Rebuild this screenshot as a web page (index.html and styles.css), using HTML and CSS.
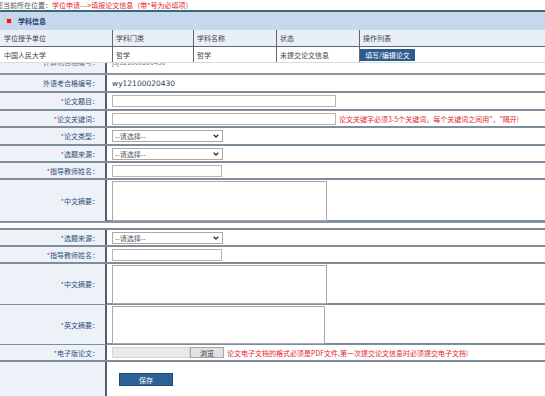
FILE: index.html
```html
<!DOCTYPE html>
<html lang="zh-CN">
<head>
  <meta charset="UTF-8">
  <title>填报论文信息</title>
  <link rel="stylesheet" href="styles.css">
</head>
<body>
  <div class="crumb">您当前所在位置：<span class="path">学位申请---&gt;填报论文信息（带*号为必填项）</span></div>

  <div class="bar"><span class="bar-icon"></span>学科信息</div>

  <div class="info-row info-head">
    <div class="cell">学位授予单位</div>
    <div class="cell">学科门类</div>
    <div class="cell">学科名称</div>
    <div class="cell">状态</div>
    <div class="cell">操作列表</div>
  </div>
  <div class="info-row info-data">
    <div class="cell">中国人民大学</div>
    <div class="cell">哲学</div>
    <div class="cell">哲学</div>
    <div class="cell">未提交论文信息</div>
    <div class="cell op"><a class="btn-edit" href="#">填写/编辑论文</a></div>
  </div>

  <form class="paper-form">
    <div class="row h12 clipped">
      <div class="label"><span>计算机合格编号：</span></div>
      <div class="value"><span>jsj121000200430</span></div>
    </div>
    <div class="row h18">
      <div class="label">外语考合格编号：</div>
      <div class="value code">wy12100020430</div>
    </div>
    <div class="row h18">
      <div class="label"><em>*</em>论文题目：</div>
      <div class="value"><input type="text" class="txt wide"></div>
    </div>
    <div class="row h17">
      <div class="label"><em>*</em>论文关键词：</div>
      <div class="value"><input type="text" class="txt wide"><span class="tip">论文关键字必须3-5个关键词，每个关键词之间用"，"隔开!</span></div>
    </div>
    <div class="row h18">
      <div class="label"><em>*</em>论文类型：</div>
      <div class="value">
        <span class="select"><select><option>--请选择--</option></select><svg width="6" height="4" viewBox="0 0 6 4"><path d="M0.7 0.7 L3 3 L5.3 0.7" fill="none" stroke="#333" stroke-width="1.3"/></svg></span>
      </div>
    </div>
    <div class="row h17">
      <div class="label"><em>*</em>选题来源：</div>
      <div class="value">
        <span class="select"><select><option>--请选择--</option></select><svg width="6" height="4" viewBox="0 0 6 4"><path d="M0.7 0.7 L3 3 L5.3 0.7" fill="none" stroke="#333" stroke-width="1.3"/></svg></span>
      </div>
    </div>
    <div class="row h17">
      <div class="label"><em>*</em>指导教师姓名：</div>
      <div class="value"><input type="text" class="txt short"></div>
    </div>
    <div class="row h42">
      <div class="label"><em>*</em>中文摘要：</div>
      <div class="value top"><textarea class="area a40"></textarea></div>
    </div>

    <div class="row sep"></div>

    <div class="row h17">
      <div class="label"><em>*</em>选题来源：</div>
      <div class="value">
        <span class="select"><select><option>--请选择--</option></select><svg width="6" height="4" viewBox="0 0 6 4"><path d="M0.7 0.7 L3 3 L5.3 0.7" fill="none" stroke="#333" stroke-width="1.3"/></svg></span>
      </div>
    </div>
    <div class="row h17">
      <div class="label"><em>*</em>指导教师姓名：</div>
      <div class="value"><input type="text" class="txt short"></div>
    </div>
    <div class="row h41">
      <div class="label"><em>*</em>中文摘要：</div>
      <div class="value top"><textarea class="area a39"></textarea></div>
    </div>
    <div class="row h40">
      <div class="label"><em>*</em>英文摘要：</div>
      <div class="value top"><textarea class="area a38"></textarea></div>
    </div>
    <div class="row h17">
      <div class="label"><em>*</em>电子版论文：</div>
      <div class="value">
        <span class="file"><span class="file-name"></span><span class="file-btn">浏览</span></span>
        <span class="tip">论文电子文档的格式必须是PDF文件,第一次提交论文信息时必须提交电子文档!</span>
      </div>
    </div>
    <div class="row last">
      <div class="label"></div>
      <div class="value save-cell"><button type="button" class="btn-save">保存</button></div>
    </div>
  </form>
</body>
</html>
```

FILE: styles.css
```css
body {
  margin: 0;
  font-family: "Noto Sans CJK SC", "Liberation Sans", sans-serif;
  font-size: 7px;
  color: #444;
  background: #fff;
  overflow: hidden;
}

.crumb {
  height: 10px;
  line-height: 10px;
  white-space: nowrap;
  text-indent: -4px;
  color: #555;
}
.crumb .path {
  color: #e5262d;
}

.bar {
  height: 18px;
  border-top: 2px solid #36687e;
  background: #c6d8ec;
  display: flex;
  align-items: center;
  gap: 7px;
  padding-left: 7px;
  font-weight: bold;
  color: #1d3d66;
}
.bar-icon {
  width: 4px;
  height: 4px;
  background: #d4232b;
  box-shadow: 0 0 0 1px #f2b9bb;
}

.info-row {
  display: grid;
  grid-template-columns: 112px 81px 83px 83px 1fr;
  box-sizing: border-box;
}
.info-head {
  height: 17px;
  background: #e8eff7;
  border-bottom: 1px solid #5c6670;
}
.info-data {
  height: 16px;
  background: #fff;
  border-bottom: 1px solid #d3dbe3;
}
.cell {
  display: flex;
  align-items: center;
  padding-left: 4px;
  white-space: nowrap;
}
.cell + .cell {
  border-left: 1px solid #666;
  padding-left: 3px;
}
.cell.op {
  padding-left: 0;
}
.btn-edit {
  display: inline-block;
  width: 55px;
  height: 12px;
  line-height: 12px;
  text-align: center;
  background: #2b5c8d;
  color: #fff;
  text-decoration: none;
}

/* form */
.row {
  display: grid;
  grid-template-columns: 107px 1fr;
  box-sizing: border-box;
  border-bottom: 2px solid #7f8d9b;
}
.label {
  background: #edf2f8;
  border-right: 2px solid #4e5f70;
  display: flex;
  align-items: center;
  justify-content: flex-end;
  padding-right: 6px;
  color: #2f4f7b;
  white-space: nowrap;
}
.label em {
  font-style: normal;
  color: #e5262d;
}
.value {
  display: flex;
  align-items: center;
  gap: 3px;
  padding-left: 5px;
  white-space: nowrap;
}
.value.top {
  align-items: flex-start;
  padding-top: 1px;
}
.code {
  font-family: "DejaVu Sans", sans-serif;
  font-size: 7.5px;
  color: #2a3f55;
}

.h12 { height: 12px; }
.h17 { height: 17px; }
.h18 { height: 18px; }
.h40 { height: 40px; }
.h41 { height: 41px; }
.h42 { height: 42px; }

.clipped {
  overflow: hidden;
  border-bottom-color: #8a97a4;
}
.clipped .label,
.clipped .value {
  align-items: flex-start;
}
.clipped span {
  margin-top: -6px;
  line-height: 10px;
  color: #777;
}

.sep {
  height: 8px;
  display: block;
  border-top: 1px solid #8d99a6;
  background: #fff;
}

.txt {
  box-sizing: border-box;
  height: 12px;
  padding: 0 2px;
  border: 1px solid #b5b5b5;
  font-size: 7px;
  background: #fff;
}
.txt.wide { width: 224px; }
.txt.short { width: 110px; }

.tip {
  color: #e5262d;
}

.select {
  display: inline-flex;
  align-items: center;
}
.select select {
  appearance: none;
  box-sizing: border-box;
  width: 111px;
  height: 12px;
  padding: 0 2px;
  border: 1px solid #a9a9a9;
  background: #fff;
  font-family: inherit;
  font-size: 7px;
  color: #555;
}
.select svg {
  margin-left: -10px;
}

.area {
  box-sizing: border-box;
  resize: none;
  border: 1px solid #a9a9a9;
  background: #fff;
}
.a40 { width: 215px; height: 40px; }
.a39 { width: 215px; height: 39px; }
.a38 { width: 213px; height: 38px; }

.file {
  display: inline-flex;
  height: 11px;
}
.file-name {
  width: 76px;
  background: #e9e9e9;
  border: 1px solid #d4d4d4;
}
.file-btn {
  width: 32px;
  text-align: center;
  line-height: 10px;
  background: #e2e2e2;
  border: 1px solid #a8a8a8;
  color: #333;
}

.last {
  height: 40px;
  border-bottom: none;
}
.save-cell {
  align-items: flex-start;
  padding-top: 11px;
  padding-left: 12px;
}
.btn-save {
  width: 54px;
  height: 13px;
  padding: 0;
  border: 1px solid #1f4b78;
  background: #2e6296;
  color: #fff;
  font-family: inherit;
  font-size: 7px;
}
```
